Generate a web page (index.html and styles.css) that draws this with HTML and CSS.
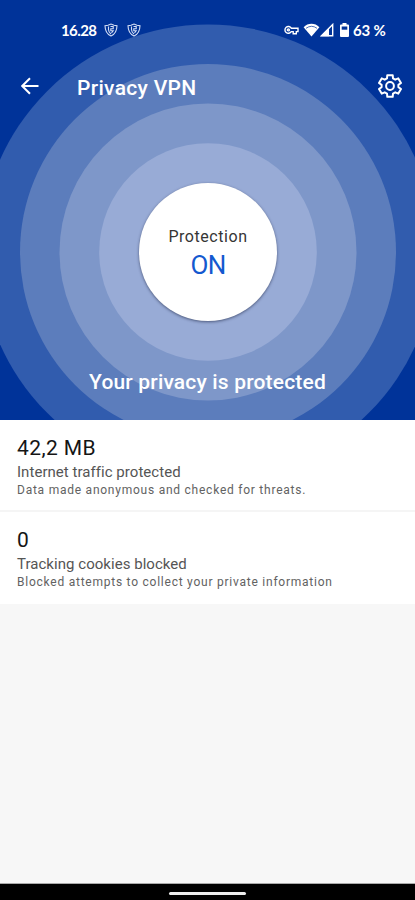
FILE: index.html
```html
<!DOCTYPE html>
<html lang="en">
<head>
<meta charset="utf-8">
<title>Privacy VPN</title>
<link rel="stylesheet" href="styles.css">
</head>
<body>
<main class="screen">
  <section class="hero">
    <svg class="rings" viewBox="0 0 415 420" aria-hidden="true">
      <circle cx="208" cy="252" r="227.5" fill="#315cae"/>
      <circle cx="208" cy="252" r="188" fill="#5c7dbc"/>
      <circle cx="208" cy="252" r="148.5" fill="#7e97c9"/>
      <circle cx="208" cy="252" r="108.8" fill="#98abd6"/>
    </svg>
    <div class="status">
      <span class="time">16.28</span>
      <svg class="shield" viewBox="0 0 14 14"><path d="M1 2.700 4 2.200 7 1l3 1.200 3 .5c-.1 5-2 8.500-6 10.300C3 11.200 1.100 7.700 1 2.700Z"/><path d="M4.500 3.500v3c0 2 1 3.300 2.500 4.500M6.500 3.500h2.700v2.200H6.800v2h2.400L7.500 10"/></svg>
      <svg class="shield" viewBox="0 0 14 14"><path d="M1 2.700 4 2.200 7 1l3 1.200 3 .5c-.1 5-2 8.500-6 10.300C3 11.200 1.100 7.700 1 2.700Z"/><path d="M4.500 3.500v3c0 2 1 3.300 2.500 4.500M6.500 3.500h2.700v2.200H6.800v2h2.400L7.500 10"/></svg>
      <span class="spacer"></span>
      <svg class="key" viewBox="0 0 15 10"><path d="M7.300 3.200A3.400 3.400 0 1 0 7.300 6.600H9.200V8.700H12.300V6.600H14V3.200Z"/><circle cx="4.400" cy="4.900" r="1"/></svg>
      <svg class="wifi" viewBox="0 0 17 14"><path d="M.6 4.200C5-.4 12-.4 16.400 4.200L8.500 13.400Z" fill="#fff"/><path d="M3 5.300Q8.500 1.300 14 5.300" fill="none" stroke="#003399" stroke-width=".7"/></svg>
      <svg class="signal" viewBox="0 0 14 14"><path d="M1.500 12.700 12.700 1.500V12.700Z" fill="none" stroke="#fff" stroke-width="1.400"/><path d="M.5 13.300 9 4.800V13.300Z" fill="#fff"/></svg>
      <svg class="battery" viewBox="0 0 9 14"><path d="M2.500 0h4v1.500H8q1 0 1 1V13q0 1-1 1H1q-1 0-1-1V2.500q0-1 1-1h1.500Z" fill="#fff"/><path d="M1.700 3.500h5.600v3.200H1.700Z" fill="#003399"/></svg>
      <span class="percent">63 %</span>
    </div>
    <header class="bar">
      <svg class="back" viewBox="0 0 18 18"><path d="M17.500 9H1.500M9 1.200 1.200 9 9 16.800"/></svg>
      <h1 class="title">Privacy VPN</h1>
      <svg class="gear" viewBox="0 0 24 24"><path d="M9.300 1.200h5.400l.3 3.200 2.300 1.300 3-1.300 2.700 4.600-2.600 1.900v2.200l2.600 1.900-2.700 4.600-3-1.300-2.300 1.300-.3 3.200H9.300L9 19.600l-2.300-1.300-3 1.300L1 15l2.600-1.900v-2.200L1 9l2.700-4.600 3 1.300L9 4.400Z"/><circle cx="12" cy="12" r="3.900"/></svg>
    </header>
    <div class="disc">
      <span class="label">Protection</span>
      <span class="state">ON</span>
    </div>
    <p class="message">Your privacy is protected</p>
  </section>
  <section class="stat">
    <div class="value">42,2 MB</div>
    <div class="name">Internet traffic protected</div>
    <div class="detail">Data made anonymous and checked for threats.</div>
  </section>
  <section class="stat stat-last">
    <div class="value">0</div>
    <div class="name">Tracking cookies blocked</div>
    <div class="detail">Blocked attempts to collect your private information</div>
  </section>
  <div class="empty"></div>
  <nav class="navbar"><span class="handle"></span></nav>
</main>
</body>
</html>
```
FILE: styles.css
```css
* { box-sizing: border-box; }
body { margin: 0; font-family: Roboto, "Liberation Sans", sans-serif; }
.screen { width: 415px; height: 900px; display: flex; flex-direction: column; background: #f7f7f7; overflow: hidden; }
.hero { position: relative; height: 420px; flex: none; display: flex; flex-direction: column; align-items: center; background: #003399; color: #fff; overflow: hidden; }
.rings { position: absolute; inset: 0; width: 415px; height: 420px; }
.status, .bar, .disc, .message { position: relative; }
.status { width: 100%; height: 60px; display: flex; align-items: center; padding: 0 29px 0 61px; font: 700 15px/20px Lato, sans-serif; white-space: nowrap; }
.time { width: 43px; letter-spacing: -0.6px; }
.shield { width: 14px; height: 14px; margin-right: 9px; fill: none; stroke: #d5dff5; stroke-width: 1.1; }
.spacer { flex: 1; }
.key { width: 15px; height: 10px; fill: none; stroke: #fff; stroke-width: 1.4; margin-right: 4px; }
.wifi { width: 17px; height: 14px; }
.signal { width: 14px; height: 14px; margin-right: 6px; }
.battery { width: 9px; height: 14px; margin-right: 4px; }
.percent { width: 33px; letter-spacing: -0.2px; }
.bar { width: 100%; height: 54px; display: flex; align-items: center; padding: 0 13px 2px 21px; }
.back { width: 18px; height: 18px; fill: none; stroke: #fff; stroke-width: 2; }
.title { flex: 1; margin: 3px 0 0 38px; font-size: 21px; line-height: 26px; font-weight: 500; letter-spacing: 0.3px; }
.gear { width: 24px; height: 24px; fill: none; stroke: #fff; stroke-width: 2; stroke-linejoin: round; }
.disc { width: 138px; height: 138px; margin: 69px 0 0 1px; border-radius: 50%; background: #fff; display: flex; flex-direction: column; align-items: center; box-shadow: 0 1px 3px rgba(35, 45, 75, 0.65); }
.label { margin-top: 43px; font-size: 16px; line-height: 22px; letter-spacing: 0.55px; color: #353535; }
.state { font-size: 26px; line-height: 34px; letter-spacing: -0.7px; color: #1459cf; }
.message { margin: 47px 0 0; font-size: 21px; line-height: 28px; font-weight: 500; letter-spacing: 0.17px; }
.stat { flex: none; height: 92px; padding: 15px 17px 0; background: #fff; border-bottom: 2px solid #f5f5f5; white-space: nowrap; }
.stat-last { border-bottom: 0; }
.value { font-size: 21px; line-height: 26px; letter-spacing: 0.4px; color: #151515; }
.name { margin-top: 1px; font-size: 15px; line-height: 20px; letter-spacing: 0.04px; color: #555; }
.detail { font-size: 12px; line-height: 17px; letter-spacing: 0.76px; color: #626262; }
.empty { flex: 1; border-bottom: 1px solid #aaa; }
.navbar { height: 16px; flex: none; background: #000; display: flex; justify-content: center; }
.handle { width: 77px; height: 3px; margin-top: 8px; border-radius: 2px; background: #eee; }
```
